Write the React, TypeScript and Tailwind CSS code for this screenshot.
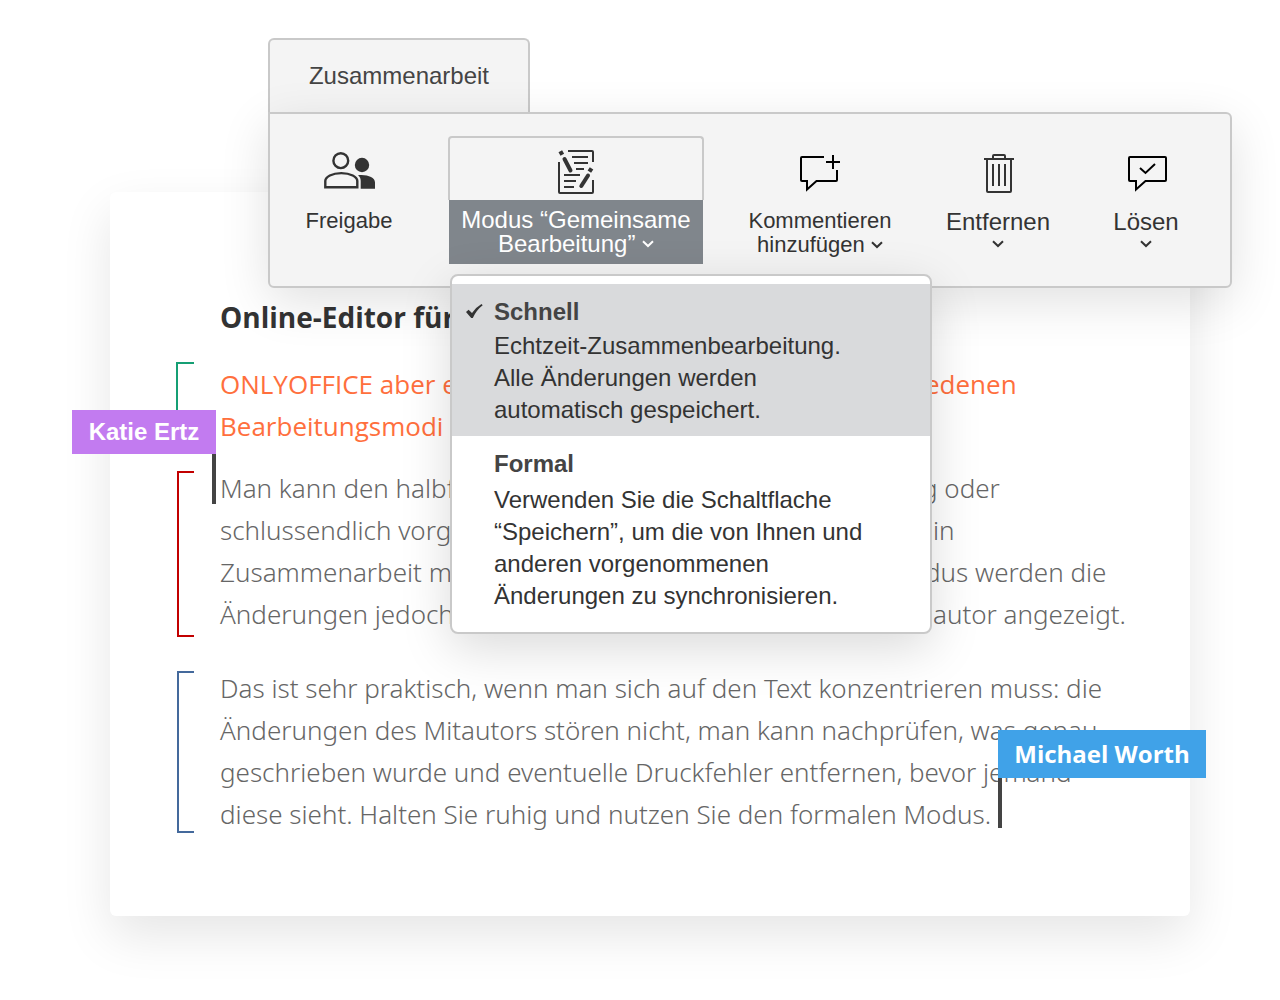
import type { ReactNode } from "react";

function ChevronDown() {
  return (
    <svg width="12" height="8" viewBox="0 0 12 8" fill="none" stroke="currentColor" strokeWidth="2" className="mb-[3px] inline-block" aria-hidden="true">
      <path d="M1 1.2 6 6l5-4.8" />
    </svg>
  );
}

function ShareIcon() {
  return (
    <svg width="52" height="42" viewBox="-1 0 52 42" fill="none" className="overflow-visible" aria-hidden="true">
      <circle cx="16.8" cy="8.7" r="7.4" stroke="#333" strokeWidth="2.4" />
      <path d="M1.3 35.3v-6.2c0-4.3 6.8-8 16-8s16 3.7 16 8v6.2z" stroke="#333" strokeWidth="2.4" />
      <circle cx="38" cy="13" r="7.2" fill="#333" />
      <path d="M34 23.2c9-1 17 2 17 7.3v6.2H36.7V29c0-2.5-.7-4.3-2.7-5.8z" fill="#333" />
    </svg>
  );
}

function CoEditIcon() {
  return (
    <svg width="38" height="46" viewBox="0 0 38 46" fill="none" stroke="#333" strokeWidth="2" aria-hidden="true">
      <path d="M11 2h24q1 0 1 1v10M36 31v12q0 1-1 1H3q-1 0-1-1V13" />
      <path d="M15 8h16M17 14h14M19 20h8M7 26h16M7 32h12M7 38h10" />
      <path d="M7.5 10 13.5 21.5" strokeWidth="4" strokeLinecap="round" />
      <path d="M31 26.5 24.3 37" strokeWidth="4" strokeLinecap="round" />
      <path d="m1.5 3.3 3.6-2 2 3.5-3.6 2zM32.8 18.2l3.5 2.2-2.2 3.3-3.5-2.2z" fill="#333" stroke="none" />
    </svg>
  );
}

function AddCommentIcon() {
  return (
    <svg width="42" height="38" viewBox="0 0 42 38" fill="none" stroke="#000" strokeWidth="2" aria-hidden="true">
      <path d="M25 3H3q-1 0-1 1v22q0 1 1 1h5v8.5L17.5 27H37q1 0 1-1V16" />
      <path d="M34 1v14M27 8h14" />
    </svg>
  );
}

function TrashIcon() {
  return (
    <svg width="32" height="40" viewBox="-2 0 32 40" fill="none" stroke="#333" strokeWidth="2" aria-hidden="true">
      <path d="M0 5h30M9 5V2q0-1 1-1h10q1 0 1 1v3M3 5v32q0 1 1 1h22q1 0 1-1V5" />
      <path d="M9 10v22M15 10v22M21 10v22" />
    </svg>
  );
}

function ResolveIcon() {
  return (
    <svg width="42" height="40" viewBox="-2 0 42 40" fill="none" stroke="#000" strokeWidth="2" className="overflow-visible" aria-hidden="true">
      <path d="M3 3h35q1 0 1 1v22q0 1-1 1H18.5L9 35.5V27H3q-1 0-1-1V4q0-1 1-1z" />
      <path d="M13 14l5.5 5L28 10" />
    </svg>
  );
}

function ToolButton({ icon, children, size = "text-[22px] pt-px" }: { icon: ReactNode; children: ReactNode; size?: string }) {
  return (
    <button type="button" className={`flex flex-col items-center text-[#333] ${size}`}>
      <span className="flex h-16 items-center justify-center pt-2">{icon}</span>
      <span className="pt-2 leading-6">{children}</span>
    </button>
  );
}

function ModeOption({ title, children, checked = false }: { title: string; children: ReactNode; checked?: boolean }) {
  return (
    <button
      type="button"
      role="menuitemradio"
      aria-checked={checked}
      className={`flex w-full pl-[14px] text-left text-2xl leading-8 text-[#333] ${checked ? "bg-[#d9dadc] pt-3 pb-[10px]" : "pt-3 pb-5"}`}
    >
      <span className="w-7 shrink-0 pt-2">
        {checked && (
          <svg width="17" height="15" viewBox="0 0 17 15" fill="#333" aria-hidden="true">
            <path d="M0 8 2.6 5.7 6 9Q9.5 3.5 15.5 0l1.2 1.3Q10.5 6 6.8 14H5.2z" />
          </svg>
        )}
      </span>
      <span>
        <strong className={`block text-[#444] ${checked ? "mb-[2px]" : "mb-1"}`}>{title}</strong>
        <span className="block">{children}</span>
      </span>
    </button>
  );
}

function Toolbar() {
  return (
    <header className="relative z-10 mr-12 ml-[268px] pt-[38px] font-['Liberation_Sans',Arial,sans-serif]">
      <div role="tablist" className="flex">
        <button type="button" role="tab" aria-selected="true" className="w-[262px] rounded-t-md border-2 border-b-0 border-[#c9c9c9] bg-[#f4f4f4] py-[18px] text-2xl leading-9 text-[#444]">
          Zusammenarbeit
        </button>
      </div>
      <div className="relative grid grid-cols-[158fr_296fr_192fr_164fr_132fr] items-start rounded-md rounded-tl-none border-2 border-[#c9c9c9] bg-[#f4f4f4] py-[22px] pr-[18px] shadow-[0_14px_50px_rgba(0,0,0,0.12)]">
        <ToolButton icon={<ShareIcon />}>Freigabe</ToolButton>
        <div className="relative mx-5">
          <button type="button" aria-haspopup="menu" aria-expanded="true" className="block w-full rounded-t-sm text-2xl text-white">
            <span className="flex h-16 items-center justify-center rounded-t-sm border-2 border-b-0 border-[#c9c9c9] pt-[6px]">
              <CoEditIcon />
            </span>
            <span className="mx-px block bg-[#80868c] py-2 leading-6">
              Modus “Gemeinsame
              <br />
              Bearbeitung” <ChevronDown />
            </span>
          </button>
          <div role="menu" className="absolute top-[138px] left-[2px] w-[482px] rounded-lg border-2 border-[#c9c9c9] bg-white pt-2 shadow-[0_14px_50px_rgba(0,0,0,0.15)]">
            <ModeOption title="Schnell" checked>
              Echtzeit-Zusammenbearbeitung.
              <br />
              Alle Änderungen werden
              <br />
              automatisch gespeichert.
            </ModeOption>
            <ModeOption title="Formal">
              Verwenden Sie die Schaltflache
              <br />
              “Speichern”, um die von Ihnen und
              <br />
              anderen vorgenommenen
              <br />
              Änderungen zu synchronisieren.
            </ModeOption>
          </div>
        </div>
        <ToolButton icon={<AddCommentIcon />}>
          Kommentieren
          <br />
          hinzufügen <ChevronDown />
        </ToolButton>
        <ToolButton icon={<TrashIcon />} size="text-2xl pt-[2px]">
          Entfernen
          <br />
          <span className="block leading-5"><ChevronDown /></span>
        </ToolButton>
        <ToolButton icon={<ResolveIcon />} size="text-2xl pt-[2px]">
          Lösen
          <br />
          <span className="block leading-5"><ChevronDown /></span>
        </ToolButton>
      </div>
    </header>
  );
}

function Passage({ bracket, children }: { bracket: string; children: ReactNode }) {
  return (
    <section className="relative flex gap-[26px]">
      <div className={`shrink-0 border-2 border-r-0 ${bracket}`} />
      <div className="whitespace-nowrap">{children}</div>
    </section>
  );
}

function SplitLine({ start, end, offset }: { start: string; end: string; offset: string }) {
  return (
    <span className="flex">
      <span className={`shrink-0 ${offset}`}>{start}</span>
      <span>{end}</span>
    </span>
  );
}

function Document() {
  return (
    <article className="mr-[90px] ml-[110px] -mt-24 rounded-md bg-white pt-[104px] pr-10 pb-[81px] pl-[66px] font-['Open_Sans',sans-serif] text-[26px] leading-[42px] shadow-[0_20px_50px_rgba(0,0,0,0.1)]">
      <h1 className="mb-[25px] pl-11 text-[28px] font-bold text-[#333]">Online-Editor für</h1>
      <div className="mb-5 text-[#ff6f3d]">
        <Passage bracket="border-[#159f74] w-[18px] -mt-px">
          <SplitLine start="ONLYOFFICE aber e" end="edenen" offset="w-[705px]" />
          Bearbeitungsmodi
          <div className="absolute top-[47px] -left-[104px] w-36">
            <div className="bg-[#c27bf0] text-center font-['Liberation_Sans',Arial,sans-serif] text-2xl leading-[44px] font-bold text-white">Katie Ertz</div>
            <div className="ml-auto h-[50px] w-1 bg-[#444]" />
          </div>
        </Passage>
      </div>
      <div className="mb-8 font-['Noto_Sans',sans-serif] font-light text-[#666]">
        <Passage bracket="border-[#c20000] ml-px w-[17px] mt-1 -mb-[2px]">
          <SplitLine start="Man kann den halbf" end="g oder" offset="w-[702px]" />
          <SplitLine start="schlussendlich vorg" end="in" offset="w-[713px]" />
          <SplitLine start="Zusammenarbeit m" end="dus werden die" offset="w-[705px]" />
          <SplitLine start="Änderungen jedoch" end="autor angezeigt." offset="w-[713px]" />
        </Passage>
      </div>
      <Passage bracket="border-[#44699c] ml-px w-[17px] mt-1 mb-[2px]">
        <div className="font-['Noto_Sans',sans-serif] font-light text-[#666]">
          Das ist sehr praktisch, wenn man sich auf den Text konzentrieren muss: die
          <br />
          Änderungen des Mitautors stören nicht, man kann nachprüfen, was genau
          <br />
          geschrieben wurde und eventuelle Druckfehler entfernen, bevor jemand
          <br />
          diese sieht. Halten Sie ruhig und nutzen Sie den formalen Modus.
        </div>
        <div className="absolute top-[63px] left-[822px] w-52">
          <div className="bg-[#40a2e8] text-center text-2xl leading-[48px] font-bold text-white">Michael Worth</div>
          <div className="h-[50px] w-1 bg-[#444]" />
        </div>
      </Passage>
    </article>
  );
}

export default function App() {
  return (
    <main className="min-h-screen overflow-hidden bg-white">
      <Toolbar />
      <Document />
    </main>
  );
}
